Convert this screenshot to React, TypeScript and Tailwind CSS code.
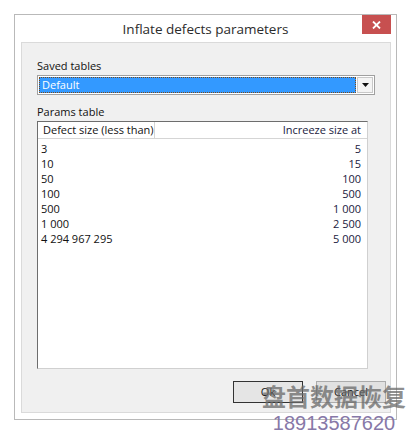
import React from "react";

const rows: [string, string][] = [
  ["3", "5"],
  ["10", "15"],
  ["50", "100"],
  ["100", "500"],
  ["500", "1 000"],
  ["1 000", "2 500"],
  ["4 294 967 295", "5 000"],
];

const ui = { fontFamily: '"Open Sans", "Noto Sans", sans-serif' };

export default function App() {
  return (
    <div className="relative h-[438px] w-[413px] overflow-hidden bg-white" style={ui}>
      {/* window */}
      <div className="ml-[14px] mt-[14px] flex h-[406px] w-[383px] flex-col border border-[#b9b9b9] bg-white">
        {/* title bar */}
        <div className="relative flex h-[27px] items-center justify-center">
          <span className="pt-[1px] text-[13.5px] text-[#2b2b2b]">Inflate defects parameters</span>
          <button className="absolute right-[5px] top-0 flex h-[19px] w-[29px] items-center justify-center bg-[#c75050] text-white">
            <svg width="9" height="8" viewBox="0 0 9 8">
              <path d="M1 0.5 L8 7.5 M8 0.5 L1 7.5" stroke="white" strokeWidth="1.8" />
            </svg>
          </button>
        </div>

        {/* client area */}
        <div className="mb-[6px] ml-[6px] mr-[5px] flex flex-1 flex-col whitespace-nowrap border border-[#dadada] bg-[#f0f0f0] pl-[15px] pr-[14px] pt-[15px] text-[11px] text-[#111]">
          <div className="leading-[15px]">Saved tables</div>
          <div className="mt-[2px] flex h-[20px] w-[338px] border border-[#a0a0a0] bg-white p-[1px]">
            <div className="flex flex-1 items-center border border-dotted border-[#7a4a1a] bg-[#3399ff] pl-[2px] text-white">
              Default
            </div>
            <div className="ml-[1px] flex w-[16px] items-center justify-center border border-[#c8c8c8] bg-[#f4f4f4]">
              <svg width="7" height="4" viewBox="0 0 7 4">
                <path d="M0 0 H7 L3.5 4 Z" fill="#111" />
              </svg>
            </div>
          </div>

          <div className="mt-[9px] leading-[15px]">Params table</div>
          <div className="mt-[2px] flex h-[248px] w-[331px] flex-col border border-[#d0d0d0] border-l-[#6d6d6d] border-t-[#6d6d6d] bg-white">
            <div className="flex h-[17px] border-b border-[#d5d5d5] bg-white">
              <div className="flex w-[117px] items-center border-r border-[#d5d5d5] pl-[5px] text-[#111]">
                Defect size (less than)
              </div>
              <div className="flex flex-1 items-center justify-end pr-[4px] text-[#1a1a40]">
                Increeze size at
              </div>
              <div className="w-[2px]" />
            </div>
            <div className="pt-[3px]">
              {rows.map(([a, b]) => (
                <div key={a} className="flex h-[15px] items-center pl-[3px] pr-[6px] text-[#111]">
                  <span className="flex-1">{a}</span>
                  <span className="text-[#1a1a40]">{b}</span>
                </div>
              ))}
            </div>
          </div>

          <div className="mt-[12px] flex w-[349px] justify-end gap-[13px]">
            <button className="h-[22px] w-[70px] border border-[#333] bg-[#e5e5e5] text-[#111] outline outline-1 -outline-offset-2 outline-[#e5e5e5]">
              Ok
            </button>
            <button className="h-[22px] w-[70px] border border-[#acacac] bg-[#e1e1e1] text-[#111]">
              Cancel
            </button>
          </div>
        </div>
      </div>

      {/* watermark */}
      <div className="absolute left-[262px] top-[379px] flex flex-col items-center whitespace-nowrap">
        <span
          className="text-[24px] font-bold leading-[34px] text-[#6a6a6a]/75"
          style={{ fontFamily: '"Noto Sans CJK SC", sans-serif' }}
        >
          盘首数据恢复
        </span>
        <span className="text-[20px] leading-[21px] text-[#8778a8]" style={{ fontFamily: '"Liberation Sans", sans-serif' }}>
          18913587620
        </span>
      </div>
    </div>
  );
}
